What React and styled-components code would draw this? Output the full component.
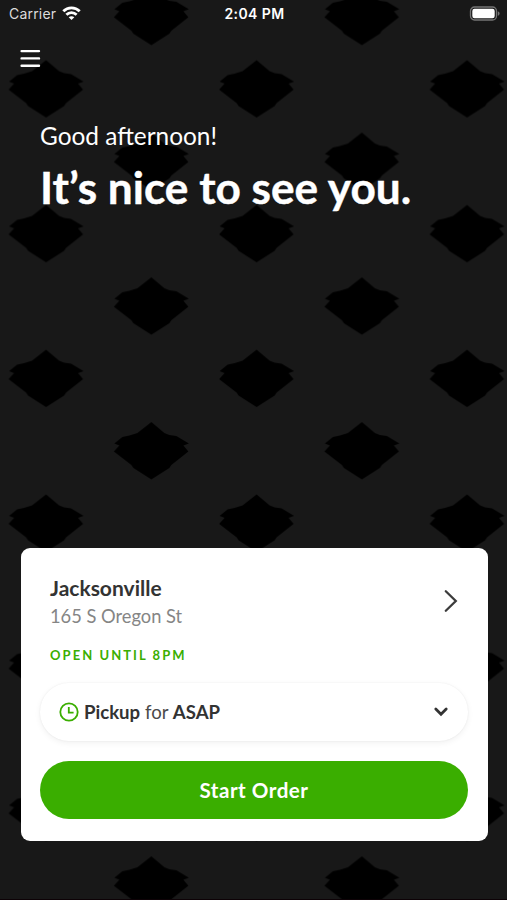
import * as React from "react";
import { useState } from "react";
import styled, { createGlobalStyle } from "styled-components";

const GlobalStyle = createGlobalStyle`
  * {
    box-sizing: border-box;
  }
  body {
    margin: 0;
    background: #181818;
  }
  button {
    border: 0;
    padding: 0;
    background: none;
    font: inherit;
    color: inherit;
    text-align: left;
    cursor: pointer;
  }
  svg {
    display: block;
    flex: none;
  }
`;

const Screen = styled.main`
  position: relative;
  display: flex;
  flex-direction: column;
  width: 507px;
  height: 900px;
  overflow: hidden;
  background: #181818;
  border-bottom: 1px solid #0d0206;
  color: #fff;
  font-family: Lato, sans-serif;
`;

const Backdrop = styled.svg`
  position: absolute;
  inset: 0;
  width: 100%;
  height: 100%;
`;

const StatusBar = styled.header`
  position: relative;
  display: grid;
  grid-template-columns: 1fr auto 1fr;
  align-items: center;
  height: 27px;
  padding: 0 7px 0 9px;
  font-family: Inter, sans-serif;
  font-size: 14px;
  line-height: 27px;
`;

const Carrier = styled.div`
  display: flex;
  align-items: center;
  gap: 6px;
  color: #dcdcdc;
  letter-spacing: 0.2px;
`;

const Clock = styled.div`
  font-weight: 600;
  letter-spacing: 0.4px;
`;

const BatteryIcon = styled.svg`
  justify-self: end;
`;

const MenuButton = styled.button`
  position: relative;
  align-self: flex-start;
  margin: 22px 0 0 20px;
`;

const Greeting = styled.section`
  position: relative;
  padding: 53px 40px 0;
`;

const Hello = styled.p`
  margin: 0;
  font-size: 24.4px;
  line-height: 30px;
`;

const Title = styled.h1`
  margin: 9px 0 0;
  font-size: 44.2px;
  font-weight: 700;
  line-height: 54px;
  white-space: nowrap;
  -webkit-text-stroke: 0.4px #fff;
`;

const Card = styled.section`
  position: relative;
  display: flex;
  flex-direction: column;
  margin: auto 19.5px 58.5px 20.5px;
  height: 293px;
  padding: 26px 19.5px 0;
  border-radius: 9px;
  background: #fff;
  color: #333;
`;

const StoreRow = styled.button`
  display: flex;
  justify-content: space-between;
  padding: 0 10px;
`;

const StoreName = styled.h2`
  margin: 0;
  font-size: 21px;
  font-weight: 700;
  line-height: 28px;
`;

const Address = styled.div`
  color: #858585;
  font-size: 18.3px;
  line-height: 29px;
`;

const Hours = styled.div`
  margin-top: 14px;
  color: #3aae00;
  font-size: 13px;
  font-weight: 700;
  line-height: 20px;
  letter-spacing: 2.05px;
`;

const PickupButton = styled.button`
  display: flex;
  align-items: center;
  height: 58px;
  margin-top: 18px;
  padding: 0 19px;
  border-radius: 29px;
  box-shadow: 0 0 2px rgba(0, 0, 0, 0.07), 0 2px 6px rgba(0, 0, 0, 0.06);
  color: #4a4a4a;
  font-size: 18.6px;

  b {
    color: #333;
  }
`;

const PickupText = styled.span`
  flex: 1;
  margin-left: 5px;
`;

const StartButton = styled.button`
  height: 58px;
  margin-top: 20px;
  border-radius: 29px;
  background: #3aae00;
  color: #fff;
  font-size: 20.6px;
  font-weight: 700;
  letter-spacing: 0.5px;
  text-align: center;
`;

const DIAMOND =
  "M0 0L13 11L18 13L25 14L37.5 21.5L32 23.5L37 29.5L20 43L18 46L0 57.5L-18 46L-20 43L-37.5 29.5L-32 23.5L-37 21.5L-29 15L-22 13.5L-14 11Z";

function Pattern() {
  return (
    <Backdrop aria-hidden="true">
      <defs>
        <pattern
          id="diamonds"
          width="210.5"
          height="144.75"
          patternUnits="userSpaceOnUse"
          patternTransform="translate(-6.5 -12.2)"
        >
          <path d={DIAMOND} transform="translate(52.6 72.4)" />
          <path d={DIAMOND} transform="translate(157.9 0)" />
        </pattern>
      </defs>
      <rect width="100%" height="100%" fill="url(#diamonds)" />
    </Backdrop>
  );
}

function Wifi() {
  return (
    <svg width="19" height="15" viewBox="0 0 19 15" fill="none" stroke="#fff" strokeWidth="2.8">
      <path d="M1.3 5.3C5.8 0.7 13.2 0.7 17.7 5.3" />
      <path d="M4.4 8.8C7.2 6 11.8 6 14.6 8.8" />
      <path d="M9.5 14L6.7 11.2C8.2 9.8 10.8 9.8 12.3 11.2Z" fill="#fff" stroke="none" />
    </svg>
  );
}

export default function App() {
  const [open, setOpen] = useState(false);

  return (
    <>
      <GlobalStyle />
      <Screen>
        <Pattern />
        <StatusBar>
          <Carrier>
            Carrier
            <Wifi />
          </Carrier>
          <Clock>2:04 PM</Clock>
          <BatteryIcon width="31" height="15" viewBox="0 0 31 15">
            <rect x="1.5" y="1" width="26" height="13" rx="4" fill="none" stroke="#747474" strokeWidth="1.3" />
            <rect x="3.3" y="2.8" width="22.4" height="9.4" rx="2.2" fill="#fff" />
            <path d="M28.8 5.2C31.2 6 31.2 9 28.8 9.8Z" fill="#747474" />
          </BatteryIcon>
        </StatusBar>

        <MenuButton type="button" aria-label="Menu">
          <svg width="21" height="19" viewBox="0 0 21 19" stroke="#fff" strokeWidth="2.4" strokeLinecap="round">
            <path d="M1.6 2.1H19M1.6 9.4H19M1.6 16.7H19" />
          </svg>
        </MenuButton>

        <Greeting>
          <Hello>Good afternoon!</Hello>
          <Title>It’s nice to see you.</Title>
        </Greeting>

        <Card>
          <StoreRow type="button">
            <div>
              <StoreName>Jacksonville</StoreName>
              <Address>165 S Oregon St</Address>
              <Hours>OPEN UNTIL 8PM</Hours>
            </div>
            <svg width="14" height="54" viewBox="0 0 14 54" fill="none" stroke="#3c3c3c" strokeWidth="2.3" strokeLinecap="round">
              <path d="M1.8 17.2L11.8 27L1.8 36.8" />
            </svg>
          </StoreRow>

          <PickupButton type="button" aria-expanded={open} onClick={() => setOpen(!open)}>
            <svg width="20" height="20" viewBox="0 0 20 20" fill="none" stroke="#3aae00" strokeWidth="1.8">
              <circle cx="10" cy="10" r="8.7" />
              <path d="M9.8 5V10.6H14.6" />
            </svg>
            <PickupText>
              <b>Pickup</b> for <b>ASAP</b>
            </PickupText>
            <svg width="16" height="12" viewBox="0 0 16 12" fill="none" stroke="#333" strokeWidth="2.8" strokeLinecap="round">
              <path d="M2.8 3L8 8.2L13.2 3" />
            </svg>
          </PickupButton>

          <StartButton type="button">Start Order</StartButton>
        </Card>
      </Screen>
    </>
  );
}
